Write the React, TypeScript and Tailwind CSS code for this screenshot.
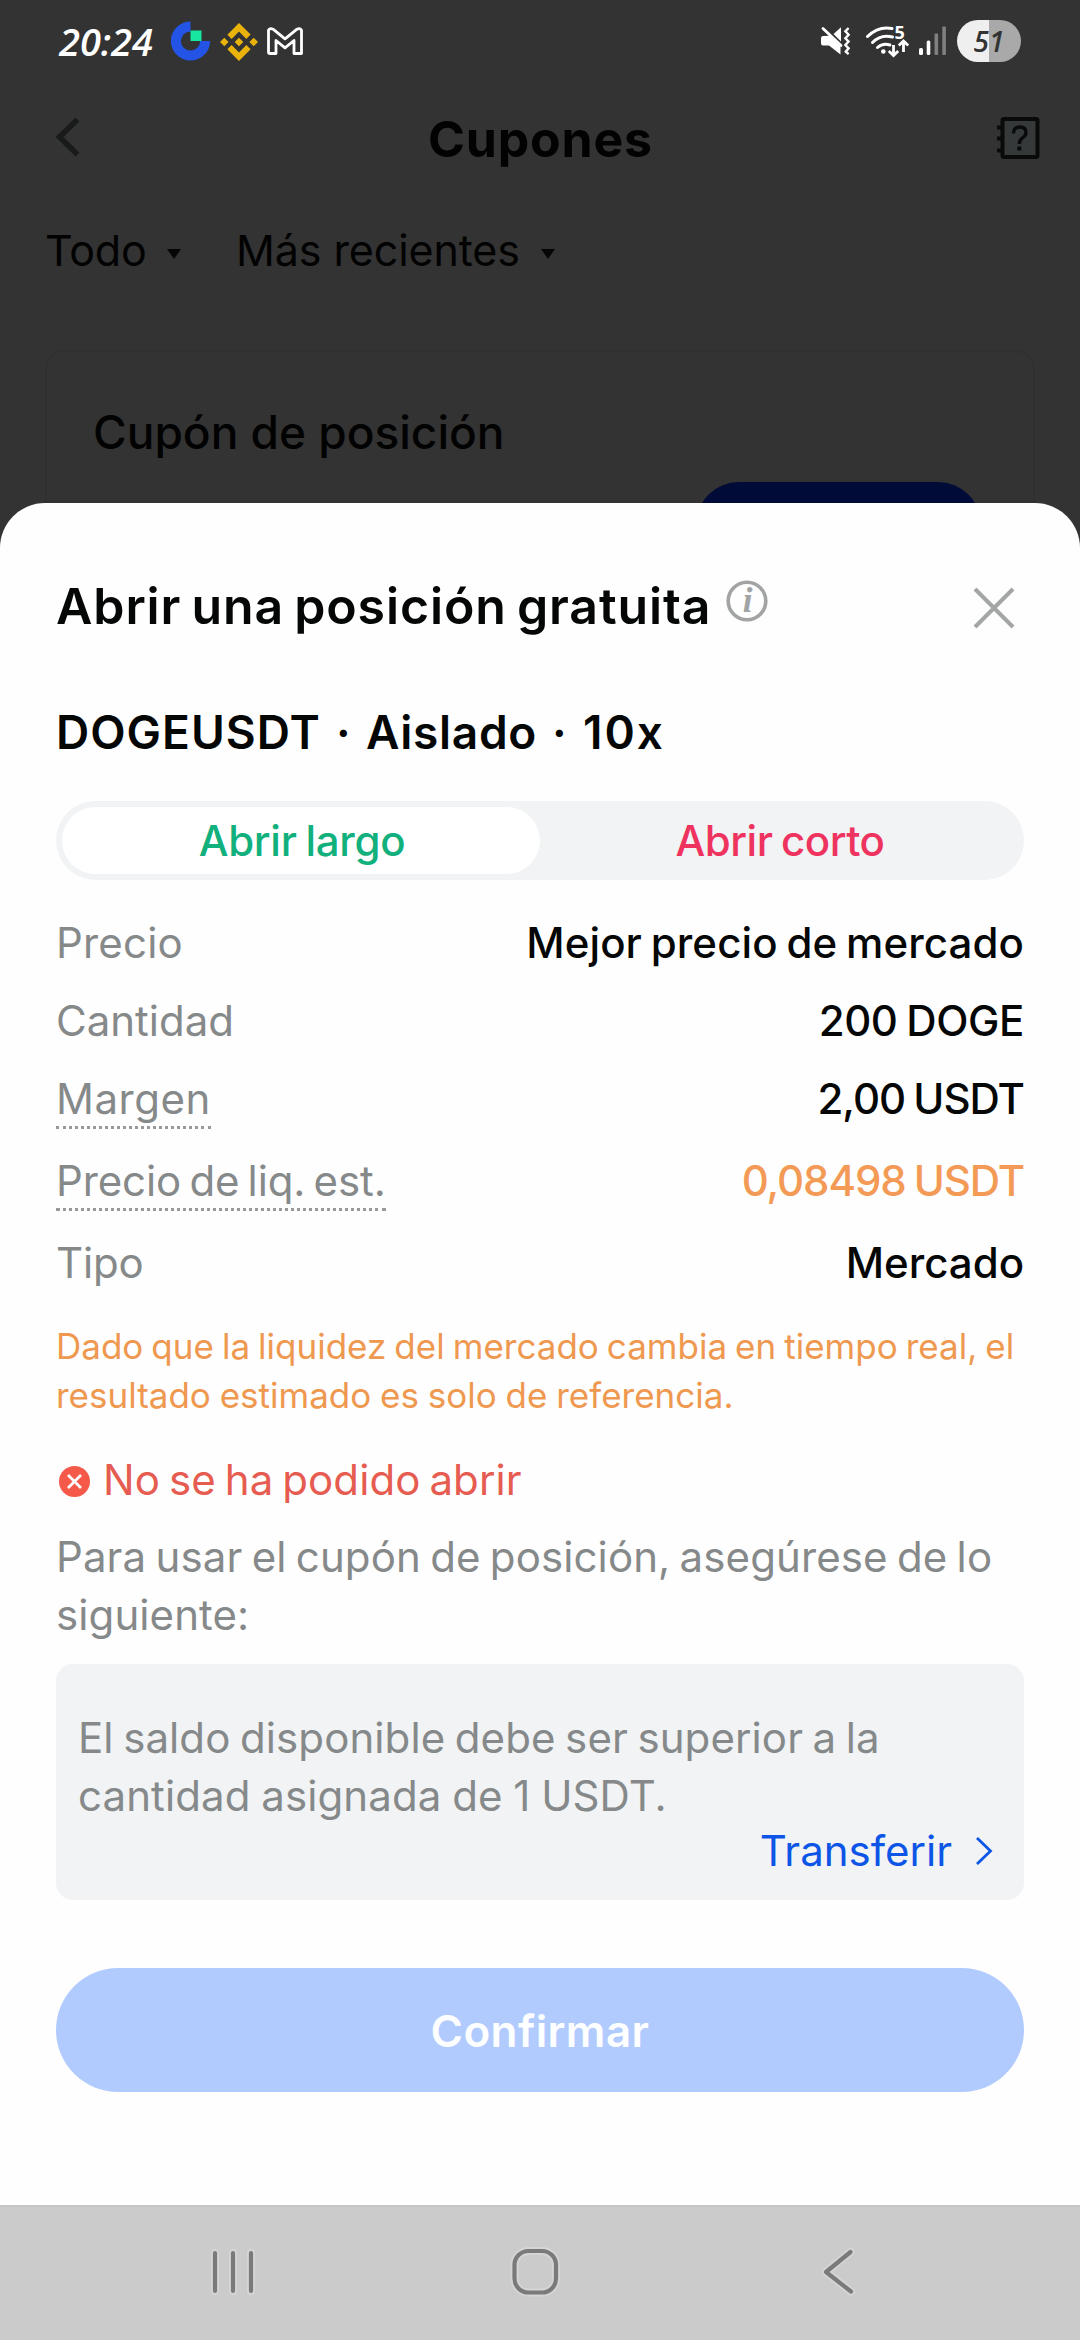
import type { ReactNode } from "react";
import { SiBinance } from "react-icons/si";

function StatusBar() {
  return (
    <div className="flex h-[82px] shrink-0 items-center">
      <span className="ml-[59px] w-[112px] whitespace-nowrap font-['Open_Sans',sans-serif] text-[38px] font-semibold italic leading-[80px] text-white">
        20:24
      </span>
      <svg className="h-10 w-10 shrink-0" viewBox="0 0 40 40">
        <path d="M19.5 5.4A14.6 14.6 0 1 0 34.1 20" fill="none" stroke="#2354e6" strokeWidth="10" />
        <rect x="19.5" y="9.5" width="11" height="10.5" fill="#17e6a1" />
      </svg>
      <SiBinance className="ml-[9px] mt-[2px] h-[38px] w-[38px] shrink-0 text-[#eab30c]" />
      <svg className="ml-[9px] h-[28px] w-[36px] shrink-0" viewBox="0 0 36 28">
        <path
          d="M1.5 25V3.2Q3 .6 6 2.2L18 11.8L30 2.2Q33 .6 34.5 3.2V26.5H27V13.5L18 20.8L9 13.5V26.5H3Q1.5 26.5 1.5 25Z"
          fill="none"
          stroke="#fff"
          strokeWidth="2.8"
          strokeLinejoin="round"
        />
      </svg>
      <svg className="ml-auto h-[30px] w-[30px] shrink-0" viewBox="0 0 30 30" fill="#fff">
        <path d="M2 10Q0 10 0 12V17.5Q0 19.5 2 19.5H8L19.5 28.5V20.5L8.5 9.8Z" />
        <path d="M12.5 8L20 1.2V15.4Z" />
        <path d="M2 2.5L20 19.5" stroke="#fff" strokeWidth="2.8" strokeLinecap="round" />
        <path
          d="M27.6 2L24.4 5.3L27.6 8.8L24.4 12.2L27.6 15.6L24.4 19L27.6 22.4L24.8 25.6L27.6 28.2"
          fill="none"
          stroke="#fff"
          strokeWidth="2.4"
        />
      </svg>
      <svg className="ml-[15px] h-[50px] w-[46px] shrink-0" viewBox="0 -8 46 50" fill="none" stroke="#fff" strokeWidth="3">
        <path d="M1.5 12.5Q12.500 1.800 26 4.500" strokeLinecap="round" />
        <path d="M6.500 18.500Q15 9.800 26.500 13" strokeLinecap="round" />
        <path d="M11.500 23.500Q17 18.500 24 21" strokeLinecap="round" />
        <circle cx="17.300" cy="27.500" r="2.300" fill="#fff" stroke="none" />
        <path d="M27.500 21V31M22.800 27L27.500 31.500L32.200 27M37.500 28V18M32.800 21.500L37.500 17L42.200 21.500" strokeWidth="2.800" />
        <text x="28.500" y="15" fill="#fff" stroke="none" className="font-['Open_Sans',sans-serif] text-[18px] font-bold">
          5
        </text>
      </svg>
      <svg className="ml-[7px] h-[30px] w-[28px] shrink-0" viewBox="0 0 28 30">
        <rect x="0" y="22" width="4" height="7" rx="1.500" fill="#fff" />
        <rect x="7.700" y="14.500" width="3.600" height="14.500" rx="1.500" fill="#fff" />
        <rect x="15.500" y="7.500" width="3.600" height="21.500" rx="1" fill="#808080" />
        <rect x="23.300" y="0.500" width="3.600" height="28.500" rx="1" fill="#808080" />
      </svg>
      <div className="ml-[10px] mr-[59px] flex h-[42px] w-[64px] shrink-0 items-center justify-center rounded-full bg-linear-to-r from-[#efefef] from-50% to-[#a9a9a9] to-50% font-['Open_Sans',sans-serif] text-[28px] font-semibold italic text-[#333]">
        51
      </div>
    </div>
  );
}

function Dropdown({ children, className }: { children: ReactNode; className: string }) {
  return (
    <div className="flex h-[60px] items-center">
      <span className={"whitespace-nowrap text-[43px] leading-[60px] " + className}>{children}</span>
      <svg className="mt-[8px] h-[10px] w-[14px]" viewBox="0 0 14 10">
        <path d="M0 0H14L7 10Z" fill="#060606" />
      </svg>
    </div>
  );
}

function CouponsPage() {
  return (
    <div className="flex h-[503px] shrink-0 flex-col overflow-hidden text-[#020202]">
      <StatusBar />
      <div className="flex h-[113px] shrink-0 items-center">
        <svg className="-mt-1 ml-[55px] h-[40px] w-[26px]" viewBox="0 0 26 40">
          <path d="M22.500 2.500L4.500 20L22.500 37.500" fill="none" stroke="#191a1a" strokeWidth="5.500" />
        </svg>
        <h1 className="flex-1 pl-[3px] text-center text-[50px] font-bold leading-[60px] tracking-[0.8px]">Cupones</h1>
        <svg className="-mt-[2px] mr-[40px] h-[42px] w-[43px]" viewBox="0 0 43 42">
          <rect x="5.500" y="2" width="35" height="38" rx="1.500" fill="#353939" stroke="#090b0b" strokeWidth="4" />
          <path d="M0 10.500H6M0 21.500H6M0 33.500H6" stroke="#090b0b" strokeWidth="4.200" />
          <path
            d="M16.500 16.500Q16.500 10 22.800 10Q29 10 29 15.500Q29 18.500 25.500 20.800Q22.300 23 22.300 27"
            fill="none"
            stroke="#090b0b"
            strokeWidth="3.400"
          />
          <rect x="20.300" y="29.500" width="4" height="4" fill="#090b0b" />
        </svg>
      </div>
      <div className="mt-[25px] flex shrink-0 pl-[45px]">
        <Dropdown className="w-[122px] tracking-[-0.2px]">Todo</Dropdown>
        <Dropdown className="ml-[55px] w-[305px] tracking-[-0.1px]">Más recientes</Dropdown>
      </div>
      <div className="mx-[45px] mt-[70px] flex h-[300px] shrink-0 flex-col rounded-[18px] border-2 border-[#303030]">
        <h2 className="ml-[46px] mt-[50px] whitespace-nowrap text-[46px] font-medium leading-[60px]">
          Cupón de posición
        </h2>
        <div className="mr-[52px] mt-[20px] h-[86px] w-[285px] self-end rounded-full bg-[#000c37]" />
      </div>
    </div>
  );
}

function Row({ label, value, className }: { label: ReactNode; value: ReactNode; className: string }) {
  return (
    <div className={"flex h-[60px] justify-between whitespace-nowrap text-[42px] leading-[60px] " + className}>
      {label}
      {value}
    </div>
  );
}

function OpenPositionSheet() {
  return (
    <div className="flex h-[1702px] shrink-0 flex-col rounded-t-[45px] bg-[#fefefe] px-[56px] pt-[58px] text-[#050606]">
      <div className="flex h-[90px] items-center">
        <h2 className="whitespace-nowrap text-[50px] font-semibold leading-[60px] tracking-[0.9px] [word-spacing:-3.4px]">
          Abrir una posición gratuita
        </h2>
        <svg className="-mt-[10px] ml-[15px] h-[42px] w-[42px]" viewBox="0 0 42 42">
          <circle cx="21" cy="21" r="18.800" fill="none" stroke="#a1a3a4" strokeWidth="3.600" />
          <text x="21.500" y="32" textAnchor="middle" fill="#a1a3a4" className="font-['Liberation_Serif',serif] text-[35px] font-bold italic">
            i
          </text>
        </svg>
        <svg className="ml-auto mr-[9px] mt-[3px] h-[42px] w-[42px]" viewBox="0 0 42 42">
          <path d="M2 2L40 40M40 2L2 40" stroke="#a3a5a6" strokeWidth="4" />
        </svg>
      </div>

      <div className="mt-[51px] flex h-[60px] whitespace-nowrap text-[46px] font-semibold leading-[60px]">
        <span className="w-[280px] tracking-[1px]">DOGEUSDT</span>
        <span className="w-[30px]">·</span>
        <span className="w-[186px] tracking-[0.700px]">Aislado</span>
        <span className="w-[31px]">·</span>
        <span className="tracking-[2px]">10x</span>
      </div>

      <div className="mt-[39px] flex h-[79px] rounded-full bg-[#f1f3f4] px-[6px] py-[6px] text-center text-[42px] font-medium leading-[67px]">
        <div className="w-[478px] rounded-full bg-white pl-[2px] tracking-[-0.300px] text-[#12b07c] [word-spacing:-2px]">Abrir largo</div>
        <div className="flex-1 pl-[2px] tracking-[-0.500px] text-[#ee335f] [word-spacing:-2px]">Abrir corto</div>
      </div>

      <Row
        className="mt-[33px]"
        label={<span className="tracking-[0.200px] text-[#86898a]">Precio</span>}
        value={<span className="font-medium tracking-[0.100px] [word-spacing:-2.500px]">Mejor precio de mercado</span>}
      />
      <Row
        className="mt-[18px]"
        label={<span className="text-[#86898a]">Cantidad</span>}
        value={<span className="font-medium tracking-[-0.400px] [word-spacing:-2px]">200 DOGE</span>}
      />
      <Row
        className="mt-[18px]"
        label={<span className="border-b-[3px] border-dotted border-[#97999a] tracking-[0.500px] text-[#86898a]">Margen</span>}
        value={<span className="font-medium tracking-[-1px] [word-spacing:-2px]">2,00 USDT</span>}
      />
      <Row
        className="mt-[22px]"
        label={
          <span className="border-b-[3px] border-dotted border-[#97999a] tracking-[-0.100px] text-[#86898a] [word-spacing:-3.500px]">
            Precio de liq. est.
          </span>
        }
        value={<span className="font-medium tracking-[-1.100px] text-[#f39a56] [word-spacing:-2px]">0,08498 USDT</span>}
      />
      <Row
        className="mt-[22px]"
        label={<span className="tracking-[-0.200px] text-[#86898a]">Tipo</span>}
        value={<span className="font-medium">Mercado</span>}
      />

      <p className="mt-[29px] whitespace-nowrap text-[35px] leading-[49px] text-[#ef9850] [word-spacing:-1.800px]">
        Dado que la liquidez del mercado cambia en tiempo real, el
        <br />
        <span className="[word-spacing:-1px]">resultado estimado es solo de referencia.</span>
      </p>

      <div className="mt-[30px] flex h-[60px] items-center text-[#e65c50]">
        <svg className="ml-[3px] mt-[3px] h-[31px] w-[31px]" viewBox="0 0 31 31">
          <circle cx="15.500" cy="15.500" r="15.500" fill="#f4594a" />
          <path d="M9 9L22 22M22 9L9 22" stroke="#fff" strokeWidth="2.800" />
        </svg>
        <span className="ml-[13px] whitespace-nowrap text-[42px] leading-[60px] tracking-[0.100px] [word-spacing:-3px]">
          No se ha podido abrir
        </span>
      </div>

      <p className="mt-[18px] whitespace-nowrap text-[42px] leading-[58px] tracking-[0.100px] text-[#86898a] [word-spacing:-2.600px]">
        Para usar el cupón de posición, asegúrese de lo
        <br />
        siguiente:
      </p>

      <div className="mt-[20px] flex h-[236px] flex-col rounded-[17px] bg-[#f1f3f4] pl-[22px] pr-[31px] pt-[45px] text-[42px]">
        <p className="whitespace-nowrap leading-[58px] tracking-[0.100px] text-[#86898a] [word-spacing:-2.400px]">
          El saldo disponible debe ser superior a la
          <br />
          <span className="[word-spacing:-1.200px]">cantidad asignada de 1 USDT.</span>
        </p>
        <div className="flex h-[52px] items-center justify-end leading-[52px] text-[#0c55e6]">
          <span>Transferir</span>
          <svg className="-mt-[1px] ml-[22px] h-[30px] w-[19px]" viewBox="0 0 19 30">
            <path d="M3 2L16.500 15L3 28" fill="none" stroke="#0c55e6" strokeWidth="2.800" />
          </svg>
        </div>
      </div>

      <button className="mt-[68px] h-[124px] rounded-full bg-[#b2cbff] pt-[2px] text-[44px] font-semibold leading-[122px] tracking-[0.400px] text-[#fdfeff]">
        Confirmar
      </button>
    </div>
  );
}

function NavigationBar() {
  return (
    <div className="flex h-[135px] shrink-0 items-center border-t-2 border-[#c5c5c5] bg-[#cbcbcb] pb-[4px]">
      <svg className="ml-[208px] h-[50px] w-[50px]" viewBox="0 0 50 50" fill="none" strokeLinecap="round">
        <path d="M7 6V44M25 6V44M43 6V44" stroke="#d5d5d5" strokeWidth="8" />
        <path d="M7 6V44M25 6V44M43 6V44" stroke="#7a7a7a" strokeWidth="4.200" />
      </svg>
      <svg className="ml-[252px] h-[50px] w-[50px]" viewBox="0 0 50 50" fill="none">
        <rect x="4.500" y="4" width="41.500" height="41.500" rx="14" stroke="#d5d5d5" strokeWidth="8" />
        <rect x="4.500" y="4" width="41.500" height="41.500" rx="14" stroke="#7a7a7a" strokeWidth="4.200" />
      </svg>
      <svg className="ml-[258px] h-[50px] w-[40px]" viewBox="0 0 40 50" fill="none" strokeLinecap="round" strokeLinejoin="round">
        <path d="M32.500 5L8 25L33 44.500" stroke="#d5d5d5" strokeWidth="8" />
        <path d="M32.500 5L8 25L33 44.500" stroke="#7a7a7a" strokeWidth="4.200" />
      </svg>
    </div>
  );
}

export default function App() {
  return (
    <div className="flex h-[2340px] w-[1080px] flex-col overflow-hidden bg-[#333333] font-['Inter',sans-serif]">
      <CouponsPage />
      <OpenPositionSheet />
      <NavigationBar />
    </div>
  );
}
